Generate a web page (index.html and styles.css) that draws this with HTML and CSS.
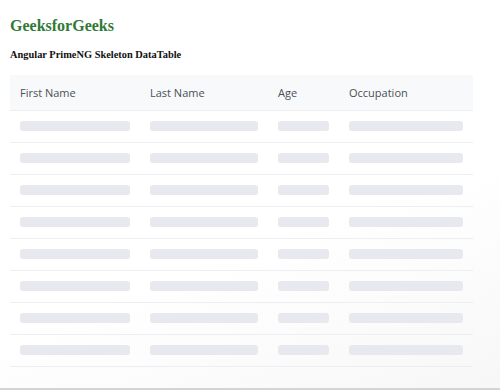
FILE: index.html
```html
<!DOCTYPE html>
<html lang="en">
<head>
    <meta charset="UTF-8">
    <meta name="viewport" content="width=device-width, initial-scale=1.0">
    <title>Angular PrimeNG Skeleton DataTable</title>
    <link rel="stylesheet" href="styles.css">
</head>
<body>
    <div class="page">
        <h1 class="brand">GeeksforGeeks</h1>
        <h3 class="subtitle">Angular PrimeNG Skeleton DataTable</h3>
        <table class="data-table">
            <thead>
                <tr>
                    <th class="col-first">First Name</th>
                    <th class="col-last">Last Name</th>
                    <th class="col-age">Age</th>
                    <th class="col-job">Occupation</th>
                </tr>
            </thead>
            <tbody>
                <tr><td><div class="skeleton"></div></td><td><div class="skeleton"></div></td><td><div class="skeleton"></div></td><td><div class="skeleton"></div></td></tr>
                <tr><td><div class="skeleton"></div></td><td><div class="skeleton"></div></td><td><div class="skeleton"></div></td><td><div class="skeleton"></div></td></tr>
                <tr><td><div class="skeleton"></div></td><td><div class="skeleton"></div></td><td><div class="skeleton"></div></td><td><div class="skeleton"></div></td></tr>
                <tr><td><div class="skeleton"></div></td><td><div class="skeleton"></div></td><td><div class="skeleton"></div></td><td><div class="skeleton"></div></td></tr>
                <tr><td><div class="skeleton"></div></td><td><div class="skeleton"></div></td><td><div class="skeleton"></div></td><td><div class="skeleton"></div></td></tr>
                <tr><td><div class="skeleton"></div></td><td><div class="skeleton"></div></td><td><div class="skeleton"></div></td><td><div class="skeleton"></div></td></tr>
                <tr><td><div class="skeleton"></div></td><td><div class="skeleton"></div></td><td><div class="skeleton"></div></td><td><div class="skeleton"></div></td></tr>
                <tr><td><div class="skeleton"></div></td><td><div class="skeleton"></div></td><td><div class="skeleton"></div></td><td><div class="skeleton"></div></td></tr>
            </tbody>
        </table>
    </div>
</body>
</html>
```

FILE: styles.css
```css
html, body {
    margin: 0;
    background: #ffffff;
}
.page {
    height: 390px;
    box-sizing: border-box;
    padding: 16px 10px 0;
    border-bottom: 2px solid #d4d4d4;
    background: linear-gradient(160deg, #ffffff 60%, #f7f7f8 100%);
}
.brand {
    font-family: "Liberation Serif", "Times New Roman", serif;
    font-size: 16px;
    font-weight: bold;
    color: #2f7a36;
    margin: 0;
    line-height: 20px;
}
.subtitle {
    font-family: "Liberation Serif", "Times New Roman", serif;
    font-size: 10.4px;
    font-weight: bold;
    color: #111;
    margin: 12px 0 0;
    line-height: 14px;
}
.data-table {
    width: 463px;
    margin-top: 13px;
    border-collapse: collapse;
    table-layout: fixed;
    font-family: "Open Sans", "Noto Sans", sans-serif;
}
.col-first { width: 130px; }
.col-last { width: 128px; }
.col-age { width: 71px; }
.col-job { width: 134px; }
.data-table th {
    box-sizing: border-box;
    background: #f8f9fa;
    color: #495057;
    font-size: 11px;
    font-weight: 500;
    text-align: left;
    padding: 0 10px;
    height: 35px;
    border-bottom: 1px solid #eceef0;
}
.data-table td {
    box-sizing: border-box;
    padding: 0 10px;
    height: 32px;
    border-bottom: 1px solid #eceef0;
}
.skeleton {
    height: 10px;
    border-radius: 3px;
    background: #e8e9ee;
}
```
